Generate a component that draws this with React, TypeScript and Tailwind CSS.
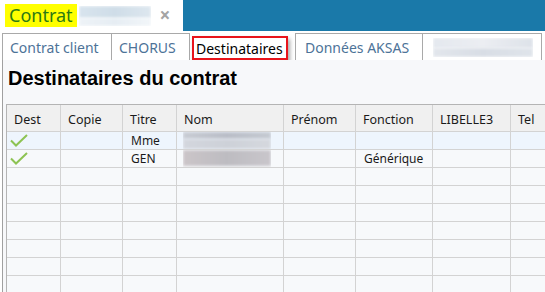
import { Fragment } from "react";

const cols = ["Dest", "Copie", "Titre", "Nom", "Prénom", "Fonction", "LIBELLE3", "Tel"];

type Row = { dest: boolean; titre: string; nom: boolean; fonction: string };

const rows: Row[] = [
    { dest: true, titre: "Mme", nom: true, fonction: "" },
    { dest: true, titre: "GEN", nom: true, fonction: "Générique" },
];

function Check() {
    return (
        <svg width="18" height="13" viewBox="0 0 18 13" className="ml-[3px]">
            <path d="M1 6.5 L6 11.5 L17 1" fill="none" stroke="#8dc353" strokeWidth="2" />
        </svg>
    );
}

function Blur({ className }: { className: string }) {
    return <div className={"blur-[1.5px] " + className} />;
}

export default function App() {
    const emptyRows = 7;

    return (
        <div className="w-[545px] h-[292px] overflow-hidden bg-white flex flex-col font-['Noto_Sans',sans-serif]">
            {/* title bar */}
            <div className="flex h-[31px] shrink-0">
                <div className="w-[183px] flex items-center pl-[5px]">
                    <span className="bg-[#ffff00] text-[#2c7a14] text-[18px] leading-[23px] px-[4px]">Contrat</span>
                    <div className="ml-[2px] w-[72px] h-[20px] flex flex-col gap-0 overflow-hidden">
                        <Blur className="h-[12px] bg-gradient-to-r from-[#d8e4ee] via-[#cfdde8] to-[#dde7ef]" />
                        <Blur className="h-[8px] bg-gradient-to-r from-[#eef3f7] via-[#e6edf3] to-[#f2f6f9]" />
                    </div>
                    <span className="ml-[9px] text-[#a4a4a4] text-[19px] font-bold leading-none">×</span>
                </div>
                <div className="flex-1 bg-[#1a79a9]" />
            </div>

            {/* tabs */}
            <div className="flex h-[29px] shrink-0 pt-[2px] pl-[2px] text-[14px]">
                <div className="w-[109px] border-t border-l border-[#a9a9a9] flex items-center pl-[7px] text-[#4d7398]">Contrat client</div>
                <div className="w-[79px] border-t border-l border-r border-[#a9a9a9] flex items-center pl-[7px] text-[#4d7398]">CHORUS</div>
                <div className="w-[105px] flex pt-[3px] pl-[2px] pr-[7px]">
                    <div className="flex-1 border-2 border-[#e8141b] flex items-center pl-[2px] text-black shadow-[2px_3px_4px_rgba(0,0,0,0.35)]">
                        Destinataires
                    </div>
                </div>
                <div className="w-[127px] border-t border-l border-[#a9a9a9] flex items-center pl-[9px] text-[#4d7398]">Données AKSAS</div>
                <div className="w-[120px] border-t border-l border-r border-[#a9a9a9] flex items-center pl-[10px]">
                    <div className="w-[100px] h-[19px] flex flex-col overflow-hidden">
                        <Blur className="h-[10px] bg-gradient-to-r from-[#e4e8ee] via-[#eceef2] to-[#dde2e9]" />
                        <Blur className="h-[9px] bg-gradient-to-r from-[#e2e6ec] via-[#d8dde5] to-[#dfe4ea]" />
                    </div>
                </div>
            </div>

            {/* content */}
            <div className="flex-1 ml-[2px] border-l border-[#a0a0a0] bg-[#f7f8fa] flex flex-col overflow-hidden">
                <h3 className="h-[44px] shrink-0 pl-[5px] pt-[6px] font-['Liberation_Sans',sans-serif] font-bold text-[20px] leading-[24px] text-black">
                    Destinataires du contrat
                </h3>
                <div className="ml-[3px] border-t border-l border-[#b4b4b4] w-[600px] grid grid-cols-[54px_62px_54px_107px_72px_77px_78px_90px] text-[12px] text-[#1a1a1a]">
                    {cols.map((c) => (
                        <div key={c} className="h-[27px] bg-[#f0f0f0] border-r border-b border-[#d3d3d3] flex items-center pl-[7px] pt-[4px] text-[12.5px]">
                            {c}
                        </div>
                    ))}
                    {rows.map((r, i) => {
                        const bg = i === 0 ? "bg-[#eef5fd]" : "bg-[#f7f9fb]";
                        return (
                            <Fragment key={i}>
                                <div className={`h-[18px] ${bg} border-r border-b border-[#d3d3d3] flex items-center`}>
                                    {r.dest && <Check />}
                                </div>
                                <div className={`h-[18px] ${bg} border-r border-b border-[#d3d3d3]`} />
                                <div className={`h-[18px] ${bg} border-r border-b border-[#d3d3d3] flex items-center pl-[8px]`}>{r.titre}</div>
                                <div className={`h-[18px] ${bg} border-r border-b border-[#d3d3d3] pl-[6px] flex items-stretch`}>
                                    {r.nom && (
                                        <div className="w-[88px] flex flex-col overflow-hidden">
                                            {i === 0 ? (
                                                <>
                                                    <Blur className="h-[7px] bg-gradient-to-r from-[#c8ccd4] via-[#b9bdc7] to-[#c5cad2]" />
                                                    <Blur className="h-[11px] bg-gradient-to-r from-[#d3d6dd] via-[#cdd1d8] to-[#d5d8de]" />
                                                </>
                                            ) : (
                                                <Blur className="h-[16px] bg-gradient-to-r from-[#cbc5c8] via-[#bdbcc1] to-[#c9c6cb]" />
                                            )}
                                        </div>
                                    )}
                                </div>
                                <div className={`h-[18px] ${bg} border-r border-b border-[#d3d3d3]`} />
                                <div className={`h-[18px] ${bg} border-r border-b border-[#d3d3d3] flex items-center pl-[8px]`}>{r.fonction}</div>
                                <div className={`h-[18px] ${bg} border-r border-b border-[#d3d3d3]`} />
                                <div className={`h-[18px] ${bg} border-r border-b border-[#d3d3d3]`} />
                            </Fragment>
                        );
                    })}
                    {Array.from({ length: emptyRows }).map((_, i) => (
                        <Fragment key={"e" + i}>
                            {cols.map((c) => (
                                <div key={c} className="h-[18px] bg-[#f7f9fb] border-r border-b border-[#d3d3d3]" />
                            ))}
                        </Fragment>
                    ))}
                </div>
            </div>
        </div>
    );
}
